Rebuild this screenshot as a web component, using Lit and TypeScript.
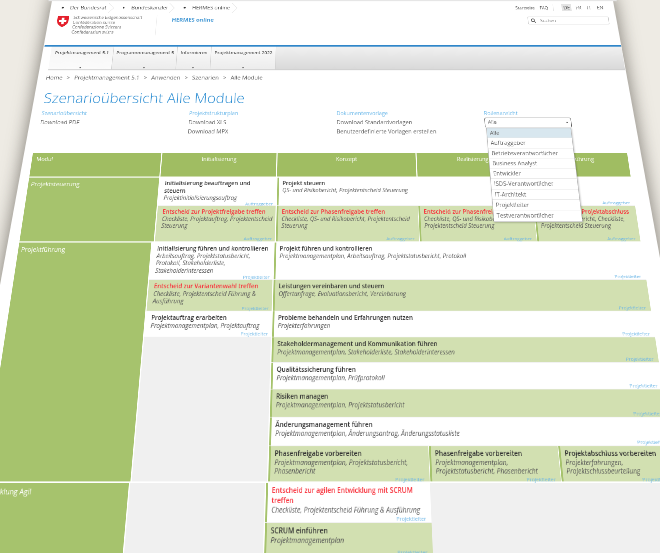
import { LitElement, html, css, nothing } from 'lit';
import { customElement } from 'lit/decorators.js';

type Cell = {
  title: string;
  items: string;
  who: string;
  red?: boolean;
  green?: boolean;
  narrow?: boolean;
  h: number;
};

// flat page size and where its corners land on screen
const PAGE_W = 1118;
const PAGE_H = 950;
const QUAD = [
  [48.6, 0],
  [616.5, 0],
  [704.5, 553],
  [-37.9, 553],
];

function pageTransform() {
  const [[x0, y0], [x1, y1], [x2, y2], [x3, y3]] = QUAD;
  const dx1 = x1 - x2;
  const dx2 = x3 - x2;
  const sx = x0 - x1 + x2 - x3;
  const dy1 = y1 - y2;
  const dy2 = y3 - y2;
  const sy = y0 - y1 + y2 - y3;
  const den = dx1 * dy2 - dx2 * dy1;
  const g = (sx * dy2 - dx2 * sy) / den;
  const h = (dx1 * sy - sx * dy1) / den;
  const a = x1 - x0 + g * x1;
  const b = x3 - x0 + h * x3;
  const d = y1 - y0 + g * y1;
  const e = y3 - y0 + h * y3;
  const m = [
    a / PAGE_W, d / PAGE_W, 0, g / PAGE_W,
    b / PAGE_H, e / PAGE_H, 0, h / PAGE_H,
    0, 0, 1, 0,
    x0, y0, 0, 1,
  ];
  return `matrix3d(${m.join(',')})`;
}

const AG = 'Auftraggeber';
const PL = 'Projektleiter';
const PMP = 'Projektmanagementplan';

const entscheidPhase: Cell = {
  title: 'Entscheid zur Phasenfreigabe treffen',
  items: 'Checkliste, QS- und Risikobericht, Projektentscheid Steuerung',
  who: AG,
  red: true,
  green: true,
  h: 63,
};

const phaseVorbereiten: Cell = {
  title: 'Phasenfreigabe vorbereiten',
  items: `${PMP}, Projektstatusbericht, Phasenbericht`,
  who: PL,
  green: true,
  h: 50,
};

const modules = [
  {
    name: 'Projektsteuerung',
    cols: [233, 208],
    three: [249, 203],
    shift: 0,
    init: [
      { title: 'Initialisierung beauftragen und steuern', items: 'Projektinitialisierungsauftrag', who: AG, narrow: true, h: 51 },
      { title: 'Entscheid zur Projektfreigabe treffen', items: 'Checkliste, Projektauftrag, Projektentscheid Steuerung', who: AG, red: true, green: true, h: 63 },
    ] as Cell[],
    lines: [
      [{ title: 'Projekt steuern', items: 'QS- und Risikobericht, Projektentscheid Steuerung', who: AG, h: 51 }],
      [
        entscheidPhase,
        entscheidPhase,
        { title: 'Entscheid zum Projektabschluss', items: 'QS- und Risikobericht, Checkliste, Projektentscheid Steuerung', who: AG, red: true, green: true, h: 63 },
      ],
    ] as Cell[][],
  },
  {
    name: 'Projektführung',
    cols: [229, 210],
    three: [251, 203],
    shift: 0,
    init: [
      { title: 'Initialisierung führen und kontrollieren', items: 'Arbeitsauftrag, Projektstatusbericht, Protokoll, Stakeholderliste, Stakeholderinteressen', who: PL, h: 63 },
      { title: 'Entscheid zur Variantenwahl treffen', items: 'Checkliste, Projektentscheid Führung & Ausführung', who: PL, red: true, green: true, h: 51 },
      { title: 'Projektauftrag erarbeiten', items: `${PMP}, Projektauftrag`, who: PL, h: 41 },
    ] as Cell[],
    lines: [
      [{ title: 'Projekt führen und kontrollieren', items: `${PMP}, Arbeitsauftrag, Projektstatusbericht, Protokoll`, who: PL, h: 63 }],
      [{ title: 'Leistungen vereinbaren und steuern', items: 'Offertanfrage, Evaluationsbericht, Vereinbarung', who: PL, green: true, h: 51 }],
      [{ title: 'Probleme behandeln und Erfahrungen nutzen', items: 'Projekterfahrungen', who: PL, h: 41 }],
      [{ title: 'Stakeholdermanagement und Kommunikation führen', items: `${PMP}, Stakeholderliste, Stakeholderinteressen`, who: PL, green: true, h: 39 }],
      [{ title: 'Qualitätssicherung führen', items: `${PMP}, Prüfprotokoll`, who: PL, h: 40 }],
      [{ title: 'Risiken managen', items: `${PMP}, Projektstatusbericht`, who: PL, green: true, h: 41 }],
      [{ title: 'Änderungsmanagement führen', items: `${PMP}, Änderungsantrag, Änderungsstatusliste`, who: PL, h: 41 }],
      [
        phaseVorbereiten,
        phaseVorbereiten,
        { title: 'Projektabschluss vorbereiten', items: 'Projekterfahrungen, Projektschlussbeurteilung', who: PL, green: true, h: 50 },
      ],
    ] as Cell[][],
  },
  {
    name: 'Entwicklung Agil',
    cols: [227, 209],
    three: [254, 203],
    shift: 9,
    init: [] as Cell[],
    lines: [
      [{ title: 'Entscheid zur agilen Entwicklung mit SCRUM treffen', items: 'Checkliste, Projektentscheid Führung & Ausführung', who: PL, red: true, h: 54 }],
      [{ title: 'SCRUM einführen', items: PMP, who: PL, green: true, h: 44 }],
    ] as Cell[][],
    short: true,
  },
];

const roles = [
  'Alle',
  'Auftraggeber',
  'Betriebsverantwortlicher',
  'Business Analyst',
  'Entwickler',
  'ISDS-Verantwortlicher',
  'IT-Architekt',
  'Projektleiter',
  'Testverantwortlicher',
];

const tabs = ['Projektmanagement 5.1', 'Programmmanagement 5', 'Informieren', 'Projektmanagement 2022'];
const crumbs = ['Home', 'Projektmanagement 5.1', 'Anwenden', 'Szenarien', 'Alle Module'];

@customElement('app-root')
export class AppRoot extends LitElement {
  static styles = css`
    * {
      box-sizing: border-box;
    }
    :host {
      display: block;
      position: relative;
      width: 660px;
      height: 553px;
      overflow: hidden;
      background: #eeebe4;
      font-family: 'Open Sans', 'Liberation Sans', sans-serif;
      color: #444;
    }
    .paper {
      position: absolute;
      left: 0;
      top: 0;
      overflow: visible;
      filter: drop-shadow(0 0 9px rgba(60, 56, 48, 0.65));
    }
    .sheet {
      position: relative;
      width: 1118px;
      height: 1000px;
      transform-origin: 0 0;
      padding-top: 1px;
      border-top: 3px solid #e6e6e6;
      filter: blur(0.45px);
    }
    .meta {
      display: flex;
      justify-content: space-between;
      align-items: center;
      height: 22px;
      margin-top: 2px;
      padding: 0 25px 0 28px;
      font-size: 9.5px;
    }
    .crumb-top {
      display: flex;
    }
    .crumb-top span {
      display: flex;
      align-items: center;
      gap: 13px;
      padding-right: 15px;
      margin-right: 17px;
      color: #444;
      position: relative;
    }
    .crumb-top i {
      width: 3.5px;
      height: 3.5px;
      border-radius: 50%;
      background: #333;
    }
    .crumb-top b {
      font-weight: 400;
      font-size: 10.5px;
    }
    .crumb-top svg {
      position: absolute;
      right: 0;
      top: -3px;
    }
    .service {
      display: flex;
      align-items: center;
      gap: 10px;
      font-size: 8.5px;
    }
    .service .sep {
      width: 1px;
      height: 14px;
      background: #e4e4e4;
      margin: 0 6px 0 0;
    }
    .lang {
      display: flex;
      align-items: center;
      gap: 5px;
      font-size: 10px;
      color: #666;
    }
    .lang span {
      padding: 1px 3px;
    }
    .lang .on {
      background: #e4e4e4;
      color: #444;
    }
    .brand {
      display: flex;
      height: 70.6px;
      padding: 6px 21px 0 22px;
    }
    .shield {
      width: 24px;
      height: 27px;
      margin-right: 8px;
      flex: none;
    }
    .confed {
      font-size: 8.4px;
      line-height: 10.7px;
      color: #666;
      width: 163px;
      height: 44px;
      border-right: 1px solid #ececec;
      white-space: nowrap;
    }
    .app-name {
      margin-left: 29px;
      margin-top: 2px;
      font-size: 11px;
      font-weight: 700;
      color: #4b9cd6;
    }
    .search {
      display: flex;
      align-items: center;
      gap: 8px;
      margin-left: auto;
      margin-top: 3px;
      width: 158px;
      height: 17px;
      padding-left: 5px;
      border: 1px solid #c4c4c4;
      border-radius: 2px;
      font-size: 9px;
      color: #777;
    }
    .rule {
      height: 3px;
      margin: 0 5px 0 6px;
      background: #2f86c9;
    }
    .tabbar {
      display: flex;
      height: 50px;
      margin: 0 5px 0 20px;
      background: linear-gradient(#f1f1f1, #d9d9d9);
      border-bottom: 2px solid #cfcfcf;
    }
    .tab {
      display: flex;
      flex-direction: column;
      align-items: center;
      justify-content: space-between;
      height: 48px;
      padding: 6px 0 2px;
      font-size: 8.9px;
      font-weight: 600;
      color: #555;
      background: linear-gradient(#fbfbfb, #ececec);
      border-right: 1px solid #d2d2d2;
    }
    .tab.on {
      background: linear-gradient(#f6f6f6, #fbfbfb);
    }
    .tab i {
      width: 0;
      height: 0;
      border: 2.5px solid transparent;
      border-top: 3px solid #555;
      border-bottom: 0;
    }
    .crumbs {
      display: flex;
      align-items: center;
      height: 29px;
      padding-left: 18px;
      font-size: 11px;
      color: #555;
    }
    .crumbs em {
      font-style: normal;
      margin: 0 8px;
    }
    h1 {
      margin: 11.4px 0 0 20px;
      font-size: 27.5px;
      line-height: 34px;
      font-weight: 300;
      color: #2f8fd3;
    }
    .docs {
      display: grid;
      grid-template-columns: repeat(4, 273px);
      padding-left: 20px;
      margin-top: 4px;
      height: 86.8px;
      font-size: 10.5px;
      line-height: 18px;
      color: #666;
    }
    .docs h2 {
      margin: 0;
      font-size: 10px;
      line-height: 18px;
      font-weight: 400;
      color: #6db9ea;
    }
    .docs div {
      white-space: nowrap;
    }
    .roles {
      position: relative;
      z-index: 2;
    }
    .select {
      display: flex;
      justify-content: space-between;
      align-items: center;
      width: 160px;
      height: 19px;
      padding: 0 5px;
      background: #fff;
      border: 1.5px solid #555;
      border-radius: 3px 3px 0 0;
      font-size: 9.5px;
    }
    .select i {
      width: 0;
      height: 0;
      border: 2.5px solid transparent;
      border-bottom: 3px solid #333;
      border-top: 0;
    }
    .menu {
      position: absolute;
      top: 38px;
      left: 2px;
      width: 156px;
      background: #fff;
      border: 1px solid #bbb;
      box-shadow: 1px 1px 3px rgba(0, 0, 0, 0.25);
    }
    .menu div {
      height: 19.3px;
      line-height: 18.3px;
      padding-left: 5px;
      font-size: 10.4px;
      border-bottom: 1px solid #e6e6e6;
    }
    .menu .on {
      background: #d8e7ef;
    }
    .table {
      margin-left: 15px;
      width: 1078px;
      display: flex;
      flex-direction: column;
      gap: 2px;
    }
    .head {
      display: grid;
      grid-template-columns: 233px 207px 250px 202px 1fr;
      gap: 2px;
      height: 44px;
      color: #fff;
      font-size: 10px;
    }
    .head div {
      background: #a0bd62;
      text-align: center;
      padding-top: 4px;
    }
    .head div:first-child {
      text-align: left;
      padding-left: 8px;
    }
    .module {
      display: grid;
      gap: 2px;
    }
    .name {
      background: #a6c36d;
      color: #fff;
      font-size: 10.8px;
      padding: 4px 5px;
    }
    .lane {
      display: flex;
      flex-direction: column;
      gap: 1px;
      background: #f0f0f0;
    }
    .line {
      display: grid;
      gap: 1px;
      background: #fff;
    }
    .line.part {
      background: #f0f0f0;
    }
    .cell {
      display: flex;
      flex-direction: column;
      padding: 3px 5px 1px 9px;
      background: #fff;
      font-size: 10.2px;
      line-height: 12.5px;
    }
    .lane:not(.right) .cell {
      padding-right: 2px;
    }
    .lane:not(.right) .cell.narrow {
      padding-right: 24px;
    }
    .right .cell {
      border-left: 3px solid #a6c36d;
      padding-left: 6px;
    }
    .cell.soft {
      background: #d2e0b1;
    }
    .cell b {
      font-size: 10.2px;
      line-height: 14px;
      font-weight: 600;
      color: #333;
    }
    .cell.alert b {
      color: #f8323c;
    }
    .cell p {
      margin: 0;
      font-style: italic;
      color: #555;
    }
    .cell small {
      margin-top: auto;
      margin-right: 3px;
      align-self: flex-end;
      font-size: 8px;
      line-height: 9px;
      color: #6cb6e6;
    }
    .cell.narrow small {
      margin-right: -19px;
    }
  `;

  private renderCell(c: Cell) {
    return html`<div
      class="cell ${c.green ? 'soft' : ''} ${c.red ? 'alert' : ''} ${c.narrow ? 'narrow' : ''}"
      style="height:${c.h}px"
    >
      <b>${c.title}</b>
      <p>${c.items}</p>
      <small>${c.who}</small>
    </div>`;
  }

  private renderLine(line: Cell[], three: number[], short: boolean) {
    // three cells sit under Konzept, Realisierung and Ausführung
    const cols =
      line.length === 3
        ? `grid-template-columns:${three[0]}px ${three[1]}px 1fr`
        : short
          ? `grid-template-columns:${three[0]}px`
          : '';
    return html`<div class="line ${short ? 'part' : ''}" style=${cols}>
      ${line.map((c) => this.renderCell(c))}
    </div>`;
  }

  render() {
    return html`<svg class="paper" width="660" height="553">
        <path d="M53 -5L612 -5L660 258L710 560L-50 560L0 285z" fill="#fff" />
      </svg>
      <div class="sheet" style="transform:${pageTransform()}">
        <div class="meta">
          <div class="crumb-top">
            ${['Der Bundesrat', 'Bundeskanzlei', 'HERMES online'].map(
              (t) => html`<span>
                <i></i><b>${t}</b>
                <svg width="12" height="22" viewBox="0 0 12 22" fill="none" stroke="#dcdcdc">
                  <path d="M1 0l10 11L1 22" />
                </svg>
              </span>`
            )}
          </div>
          <div class="service">
            <span>Startseite</span><span>FAQ</span><span class="sep"></span>
            <div class="lang">
              <span class="on">DE</span><span>FR</span><span>IT</span><span>EN</span>
            </div>
          </div>
        </div>
        <div class="brand">
          <svg class="shield" viewBox="0 0 24 27">
            <path d="M1 1h22v11c0 7-5 11-11 14C6 23 1 19 1 12z" fill="#e4202c" />
            <path d="M9.5 5.5h5v4.5H19v5h-4.5v4.5h-5V15H5v-5h4.5z" fill="#fff" />
          </svg>
          <div class="confed">
            Schweizerische Eidgenossenschaft<br />
            Confédération suisse<br />
            Confederazione Svizzera<br />
            Confederaziun svizra
          </div>
          <div class="app-name">HERMES online</div>
          <div class="search">
            <svg width="10" height="10" viewBox="0 0 10 10" fill="none" stroke="#555" stroke-width="1.4">
              <circle cx="4" cy="4" r="3" />
              <path d="M6.2 6.2L9.5 9.5" />
            </svg>
            Suchen
          </div>
        </div>
        <div class="rule"></div>
        <div class="tabbar">
          ${tabs.map(
            (t, i) => html`<div
              class="tab ${i === 0 ? 'on' : ''}"
              style="width:${[120, 122, 65, 124][i]}px"
            >
              ${t}<i></i>
            </div>`
          )}
        </div>
        <div class="crumbs">
          ${crumbs.map(
            (c, i) => html`${i ? html`<em>&gt;</em>` : nothing}<span>${c}</span>`
          )}
        </div>
        <h1>Szenarioübersicht Alle Module</h1>
        <div class="docs">
          <div><h2>Szenarioübersicht</h2>Download PDF</div>
          <div><h2>Projektstrukturplan</h2>Download XLS<br />Download MPX</div>
          <div>
            <h2>Dokumentenvorlage</h2>
            Download Standardvorlagen<br />
            Benutzerdefinierte Vorlagen erstellen
          </div>
          <div class="roles">
            <h2>Rollenansicht</h2>
            <div class="select">Alle<i></i></div>
            <div class="menu">
              ${roles.map((r, i) => html`<div class=${i === 0 ? 'on' : ''}>${r}</div>`)}
            </div>
          </div>
        </div>
        <div class="table">
          <div class="head">
            <div>Modul</div>
            <div>Initialisierung</div>
            <div>Konzept</div>
            <div>Realisierung</div>
            <div>Ausführung</div>
          </div>
          ${modules.map(
            (m) => html`<div
              class="module"
              style="grid-template-columns:${m.cols[0]}px ${m.cols[1]}px 1fr"
            >
              <div class="name" style="margin-left:${-m.shift}px">${m.name}</div>
              <div class="lane">${m.init.map((c) => this.renderCell(c))}</div>
              <div class="lane right">
                ${m.lines.map((l) => this.renderLine(l, m.three, !!m.short))}
              </div>
            </div>`
          )}
        </div>
      </div>`;
  }
}
